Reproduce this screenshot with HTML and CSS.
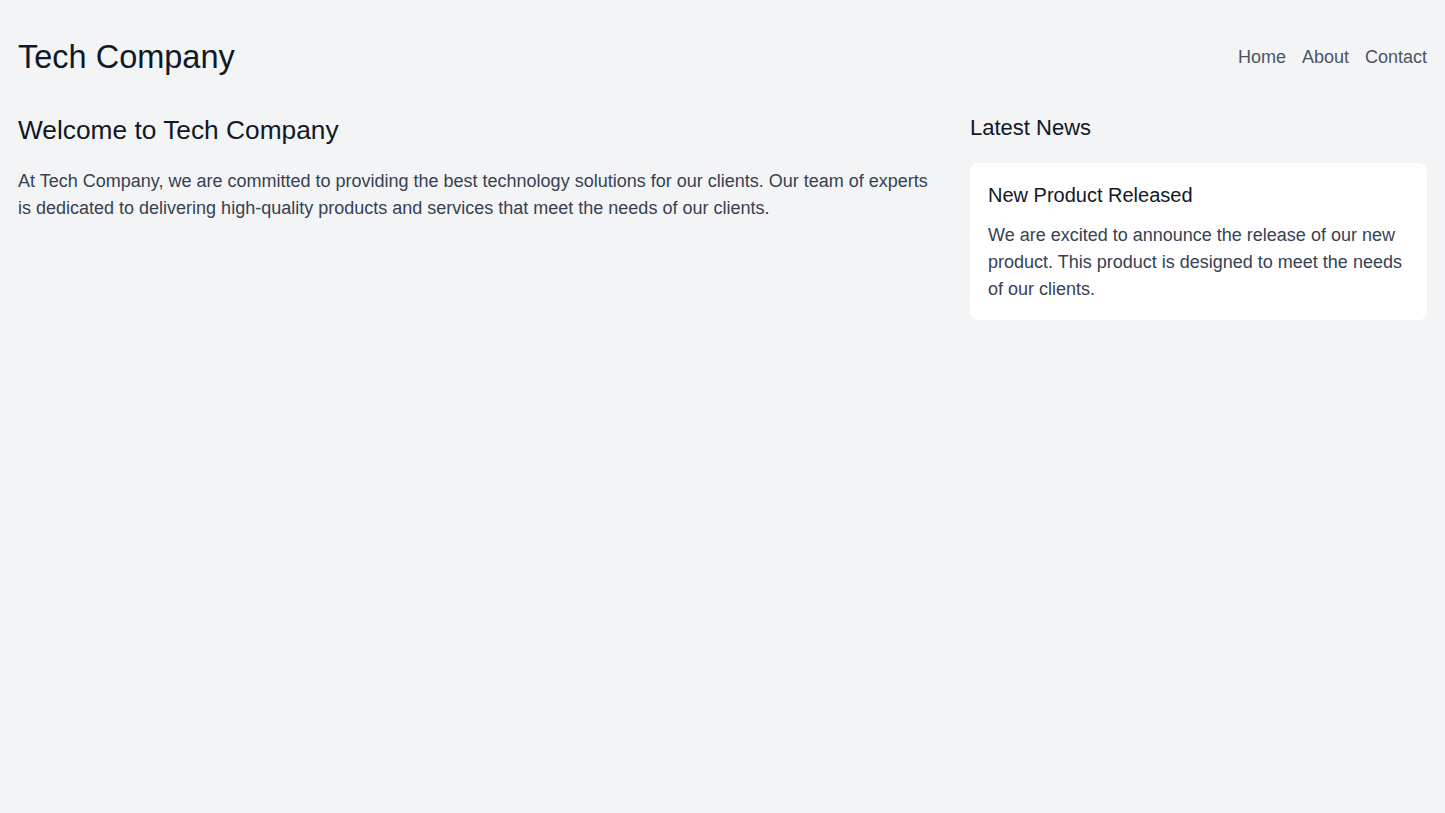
FILE: index.html
```html
<!DOCTYPE html>
<html lang="en">
<head>
<meta charset="utf-8">
<title>Tech Company</title>
<link rel="stylesheet" href="styles.css">
</head>
<body>
<div class="page">
  <header class="header">
    <h1 class="brand">Tech Company</h1>
    <nav class="nav">
      <a href="#" class="nav-link">Home</a>
      <a href="#" class="nav-link">About</a>
      <a href="#" class="nav-link">Contact</a>
    </nav>
  </header>
  <main class="main">
    <section class="intro">
      <h2 class="intro-title">Welcome to Tech Company</h2>
      <p class="intro-text">At Tech Company, we are committed to providing the best technology solutions for our clients. Our team of experts is dedicated to delivering high-quality products and services that meet the needs of our clients.</p>
    </section>
    <aside class="news">
      <h3 class="news-title">Latest News</h3>
      <article class="card">
        <h4 class="card-title">New Product Released</h4>
        <p class="card-text">We are excited to announce the release of our new product. This product is designed to meet the needs of our clients.</p>
      </article>
    </aside>
  </main>
</div>
</body>
</html>
```
FILE: styles.css
```css
* { box-sizing: border-box; }
html, body { margin: 0; padding: 0; }
body {
  background: #f3f4f6;
  font-family: "Liberation Sans", Arial, sans-serif;
  color: #111827;
  min-height: 813px;
}
.page {
  padding: 37px 18px 0;
}
.header {
  display: flex;
  align-items: center;
  justify-content: space-between;
}
.brand {
  margin: 0;
  font-size: 32.5px;
  line-height: 40px;
  font-weight: 400;
  color: #111827;
}
.nav {
  display: flex;
  gap: 16px;
}
.nav-link {
  font-size: 18px;
  line-height: 27px;
  color: #4b5563;
  text-decoration: none;
}
.main {
  display: grid;
  grid-template-columns: 2fr 1fr;
  gap: 38px;
  margin-top: 37px;
  align-items: start;
}
.intro-title {
  margin: 0 0 22px;
  font-size: 26.3px;
  line-height: 32px;
  font-weight: 400;
  color: #111827;
}
.intro-text {
  margin: 0;
  font-size: 18px;
  line-height: 27px;
  color: #374151;
}
.news-title {
  margin: 0 0 21px;
  font-size: 22px;
  line-height: 28px;
  font-weight: 400;
  color: #111827;
}
.card {
  background: #ffffff;
  border-radius: 8px;
  padding: 18px 18px 17px;
}
.card-title {
  margin: 0 0 13px;
  font-size: 20px;
  line-height: 28px;
  font-weight: 400;
  color: #111827;
}
.card-text {
  margin: 0;
  font-size: 18px;
  line-height: 27px;
  color: #374151;
}
```
